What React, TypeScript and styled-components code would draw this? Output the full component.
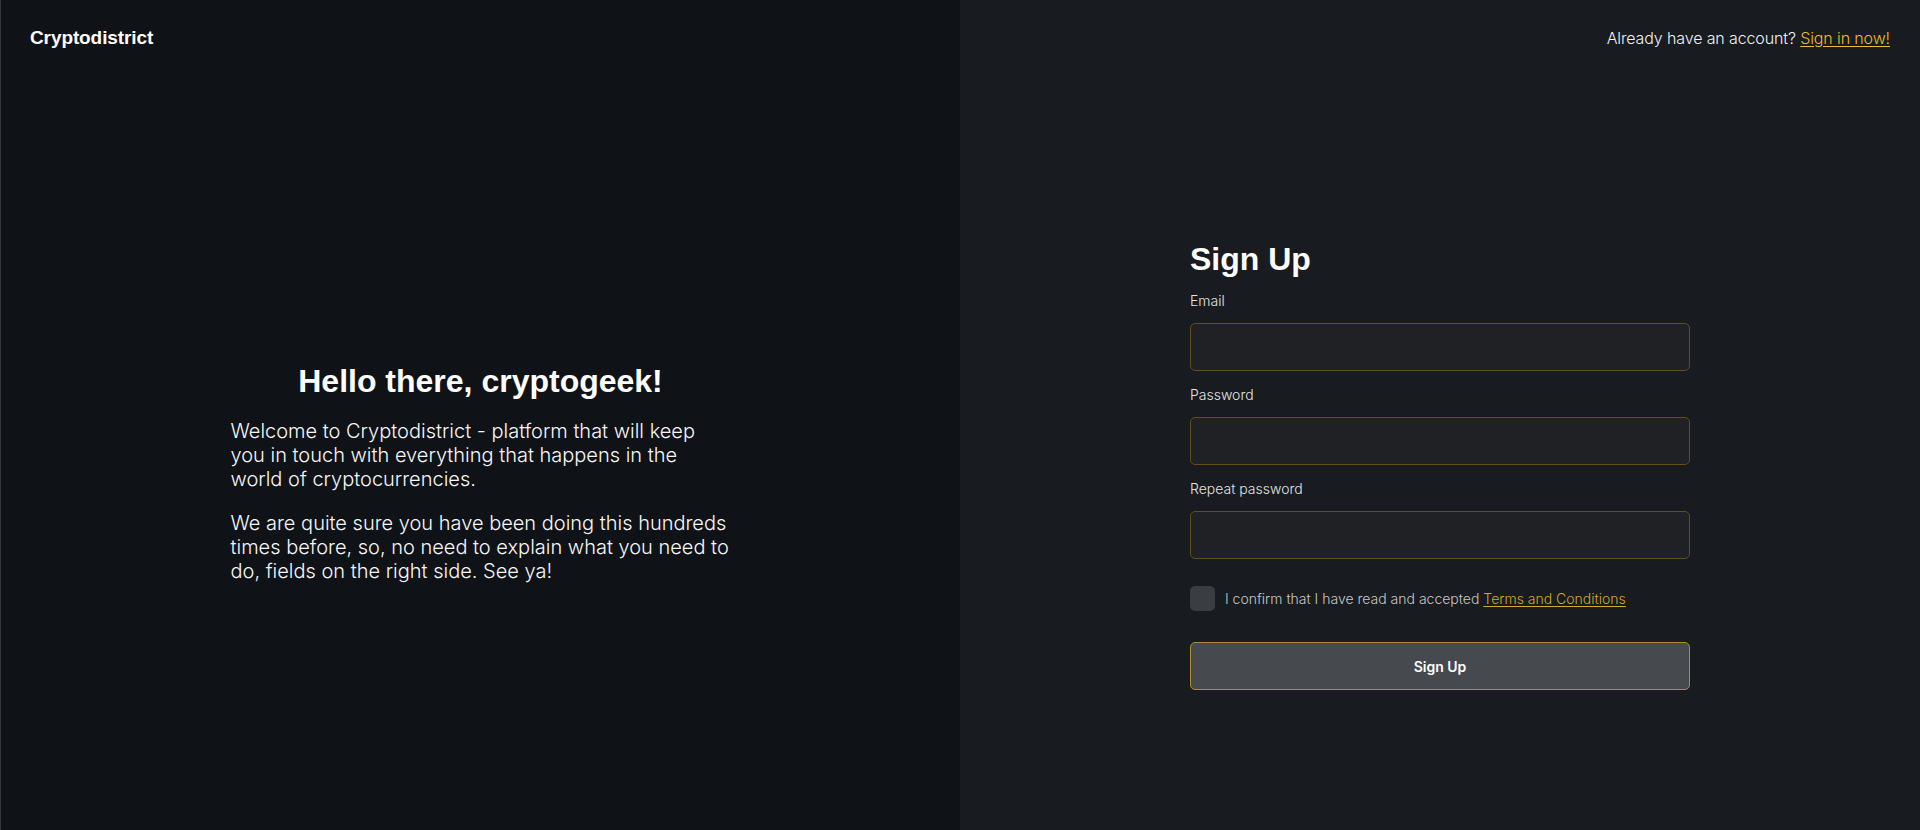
import React from "react";
import styled, { createGlobalStyle } from "styled-components";

const GlobalStyle = createGlobalStyle`
  html, body {
    margin: 0;
    padding: 0;
    background: #181b20;
  }
  * { box-sizing: border-box; }
`;

const Page = styled.div`
  display: grid;
  grid-template-columns: 1fr 1fr;
  height: 830px;
  width: 1920px;
  overflow: hidden;
`;

const LeftPanel = styled.section`
  background: #0f1217;
  border-left: 1px solid #34373c;
  display: flex;
  flex-direction: column;
`;

const RightPanel = styled.section`
  background: #181b20;
  display: flex;
  flex-direction: column;
`;

const Header = styled.header<{ $align: "start" | "end" }>`
  display: flex;
  justify-content: ${(p) => (p.$align === "end" ? "flex-end" : "flex-start")};
  padding: 27px 30px 0 ${(p) => (p.$align === "end" ? "30px" : "29px")};
  height: 49px;
`;

const Logo = styled.div`
  font-family: "Liberation Sans", Arial, sans-serif;
  font-weight: 700;
  font-size: 19px;
  line-height: 22px;
  color: #ffffff;
  letter-spacing: -0.1px;
`;

const AccountNote = styled.div`
  font-family: Inter, "Noto Sans", sans-serif;
  font-size: 16px;
  font-weight: 300;
  line-height: 22px;
  letter-spacing: -0.12px;
  color: #f2f2f2;
`;

const Link = styled.a<{ $tone?: "bright" | "muted" }>`
  color: ${(p) => (p.$tone === "muted" ? "#d4a82a" : "#ebbc2c")};
  text-decoration: underline;
  text-underline-offset: 2px;
  cursor: pointer;
`;

const Intro = styled.div`
  width: 500px;
  margin: 314px auto 0;
  color: #f2f2f2;
`;

const IntroTitle = styled.h1`
  margin: 0 0 20px;
  font-family: "Liberation Sans", Arial, sans-serif;
  font-weight: 700;
  font-size: 32px;
  line-height: 36px;
  text-align: center;
  color: #ffffff;
`;

const IntroText = styled.p`
  margin: 0 0 20px;
  font-family: Inter, "Noto Sans", sans-serif;
  font-size: 20px;
  line-height: 24px;
  font-weight: 300;
  color: #f7f7f7;
`;

const Form = styled.form`
  width: 500px;
  margin: 190px auto 0;
  display: flex;
  flex-direction: column;
`;

const FormTitle = styled.h2`
  margin: 0 0 12px;
  font-family: "Liberation Sans", Arial, sans-serif;
  font-weight: 700;
  font-size: 32px;
  line-height: 40px;
  color: #ffffff;
`;

const Field = styled.div`
  display: flex;
  flex-direction: column;
  gap: 12px;
  margin-bottom: 14px;
`;

const Label = styled.label`
  font-family: Inter, "Noto Sans", sans-serif;
  font-size: 14px;
  font-weight: 300;
  line-height: 20px;
  color: #e4e4e4;
`;

const Input = styled.input`
  height: 48px;
  width: 100%;
  background: #202125;
  border: 1px solid #5f4f1d;
  border-radius: 5px;
  padding: 0 14px;
  color: #ffffff;
  font-family: Inter, "Noto Sans", sans-serif;
  font-size: 14px;
  outline: none;
`;

const CheckRow = styled.div`
  display: flex;
  align-items: center;
  gap: 10px;
  margin-top: 13px;
`;

const CheckBox = styled.span`
  width: 25px;
  height: 25px;
  border-radius: 5px;
  background: #3a3d42;
  flex-shrink: 0;
`;

const CheckText = styled.span`
  font-family: Inter, "Noto Sans", sans-serif;
  font-size: 14px;
  font-weight: 300;
  line-height: 20px;
  color: #c8c8c8;
`;

const SubmitButton = styled.button`
  margin-top: 31px;
  height: 48px;
  width: 100%;
  background: #46494e;
  border: 1px solid #a88d32;
  border-radius: 5px;
  color: #ffffff;
  font-family: Inter, "Noto Sans", sans-serif;
  font-weight: 600;
  font-size: 14px;
  cursor: pointer;
`;

export default function App() {
  return (
    <>
      <GlobalStyle />
      <Page>
        <LeftPanel>
          <Header $align="start">
            <Logo>Cryptodistrict</Logo>
          </Header>
          <Intro>
            <IntroTitle>Hello there, cryptogeek!</IntroTitle>
            <IntroText>
              Welcome to Cryptodistrict - platform that will keep you in touch with everything that happens in the world of cryptocurrencies.
            </IntroText>
            <IntroText>
              We are quite sure you have been doing this hundreds times before, so, no need to explain what you need to do, fields on the right side. See ya!
            </IntroText>
          </Intro>
        </LeftPanel>
        <RightPanel>
          <Header $align="end">
            <AccountNote>
              Already have an account? <Link>Sign in now!</Link>
            </AccountNote>
          </Header>
          <Form onSubmit={(e) => e.preventDefault()}>
            <FormTitle>Sign Up</FormTitle>
            <Field>
              <Label htmlFor="email">Email</Label>
              <Input id="email" type="email" />
            </Field>
            <Field>
              <Label htmlFor="password">Password</Label>
              <Input id="password" type="password" />
            </Field>
            <Field>
              <Label htmlFor="repeat">Repeat password</Label>
              <Input id="repeat" type="password" />
            </Field>
            <CheckRow>
              <CheckBox />
              <CheckText>
                I confirm that I have read and accepted <Link $tone="muted">Terms and Conditions</Link>
              </CheckText>
            </CheckRow>
            <SubmitButton type="submit">Sign Up</SubmitButton>
          </Form>
        </RightPanel>
      </Page>
    </>
  );
}
